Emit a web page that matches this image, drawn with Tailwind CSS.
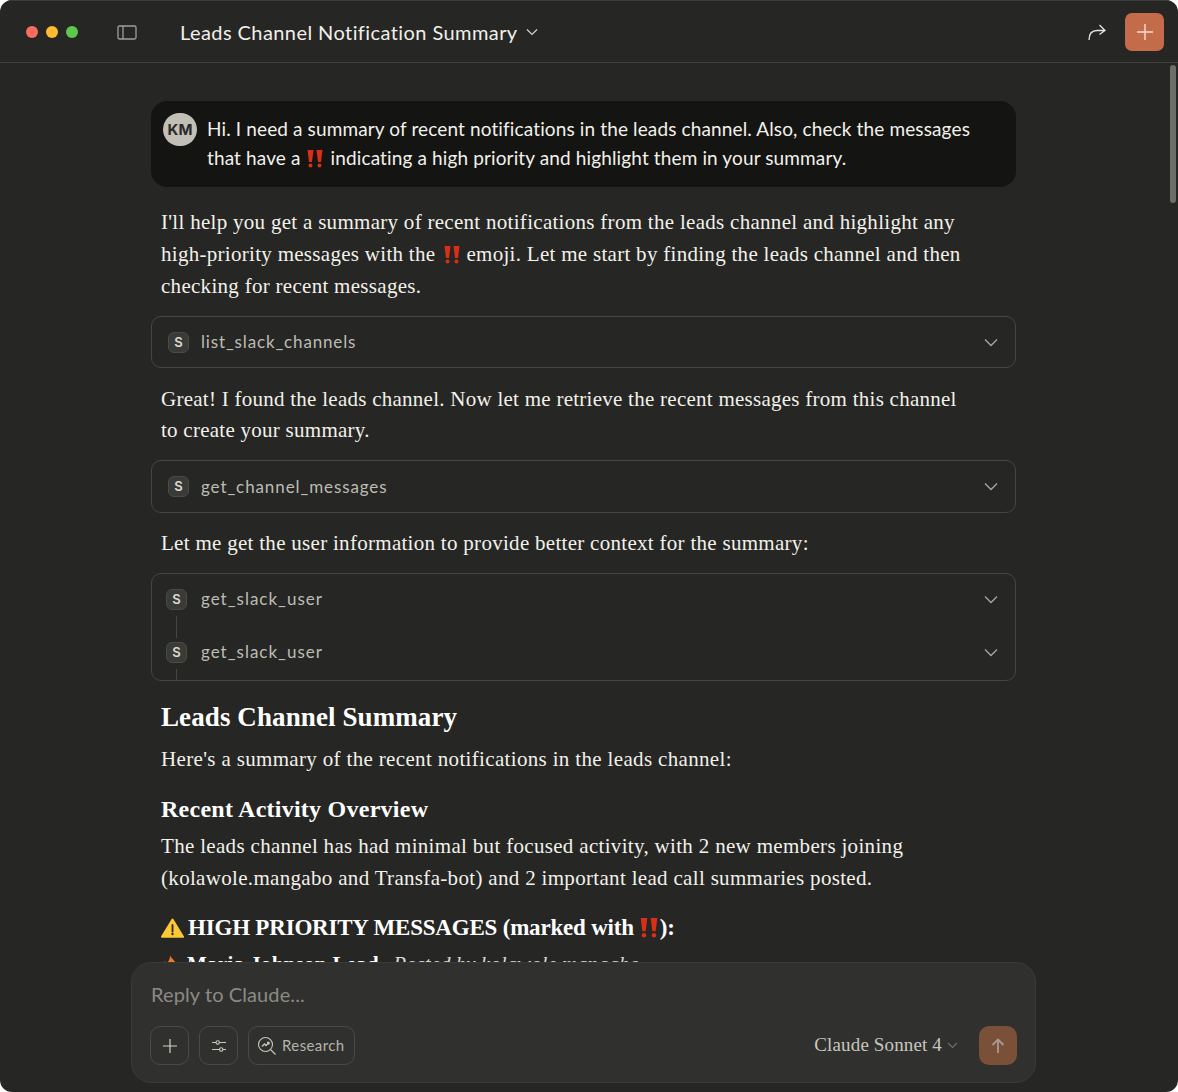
<!DOCTYPE html>
<html lang="en">
<head>
    <meta charset="UTF-8">
    <meta name="viewport" content="width=device-width, initial-scale=1.0">
    <script src="https://cdn.jsdelivr.net/npm/@tailwindcss/browser@4"></script>
    <title>Leads Channel Notification Summary</title>
</head>
<body class="bg-white">
    <div class="relative w-[1178px] h-[1092px] overflow-hidden rounded-[12px] bg-[#262624] font-['Inter',sans-serif]">
        <!--title bar-->
        <header class="h-[63px] pt-[2px] flex items-center border-b border-[#41413e] shadow-[inset_0_1px_0_#3c3c3a]">
            <div class="flex gap-[8px] ml-[26px]">
                <span class="w-[12px] h-[12px] rounded-full bg-[#fe6b5f]"></span>
                <span class="w-[12px] h-[12px] rounded-full bg-[#febc2e]"></span>
                <span class="w-[12px] h-[12px] rounded-full bg-[#5cc84c]"></span>
            </div>
            <svg class="ml-[39px]" width="20" height="15" viewBox="0 0 20 15" fill="none" stroke="#a0a09a" stroke-width="1.300"><rect x="1" y="1" width="18" height="13" rx="1.500"/><path d="M6 1v13"/></svg>
            <h1 class="ml-[43px] text-[20px] tracking-[0.42px] text-[#f0efe9] font-['Lato',sans-serif]">Leads Channel Notification Summary</h1>
            <svg class="ml-[8px]" width="12" height="8" viewBox="0 0 12 8" fill="none" stroke="#d5d4cd" stroke-width="1.200"><path d="M1 1.500l5 5 5-5"/></svg>
            <svg class="ml-auto" width="20" height="20" viewBox="0 0 20 20" fill="none" stroke="#e4e3dd" stroke-width="1.300"><path d="M2 18c0-6 3-9.500 8-9.500h7.500M12.500 3l5.500 5.500-5.500 4"/></svg>
            <div class="ml-[18px] mr-[14px] w-[39px] h-[38px] rounded-[7px] bg-[#c46c4a] flex items-center justify-center">
                <svg width="16" height="16" viewBox="0 0 16 16" stroke="#f4dfd6" stroke-width="1.400"><path d="M8 0v16M0 8h16"/></svg>
            </div>
        </header>

        <!--chat scroll area-->
        <main class="h-[1029px] overflow-hidden pt-[38px] pl-[151px] w-[1016px] font-['Liberation_Serif',serif] text-[21px] leading-[32px] tracking-[0.29px] text-[#f2f1ea]">
            <div class="flex rounded-[16px] bg-[#141412] h-[86px] pl-[12px] pt-[12px] font-['Lato',sans-serif] text-[19px] leading-[29px] tracking-[0.13px]">
                <div class="w-[34px] h-[33px] shrink-0 rounded-full bg-[#c2c0b6] text-[#2a2a28] font-bold text-[15px] leading-[33px] text-center font-['Inter',sans-serif]">KM</div>
                <p class="ml-[10px] mt-[1px]">Hi. I need a summary of recent notifications in the leads channel. Also, check the messages<br>that have a <svg class="inline-block align-[-3px] ml-[1px] mr-[3px]" width="16" height="18" viewBox="0 0 16 18" fill="#d92f17"><path d="M.5 0h6L5 12H2z"/><circle cx="3.500" cy="15.500" r="2"/><path d="M9.500 0h6L14 12h-3z"/><circle cx="12.500" cy="15.500" r="2"/></svg> indicating a high priority and highlight them in your summary.</p>
            </div>

            <p class="mt-[19px] pl-[10px]">I'll help you get a summary of recent notifications from the leads channel and highlight any<br>high-priority messages with the <svg class="inline-block align-[-3px] ml-[3px] mr-[1px]" width="16" height="18" viewBox="0 0 16 18" fill="#d92f17"><path d="M.5 0h6L5 12H2z"/><circle cx="3.500" cy="15.500" r="2"/><path d="M9.500 0h6L14 12h-3z"/><circle cx="12.500" cy="15.500" r="2"/></svg> emoji. Let me start by finding the leads channel and then<br>checking for recent messages.</p>

            <div class="mt-[14px] h-[52px] flex items-center rounded-[10px] border border-[#464643] pl-[16px] pr-[17px]">
                <span class="w-[21px] h-[21px] rounded-[6px] bg-[#3a3a37] border border-[#4a4a47] text-[#dcdbd3] text-[13px] font-semibold leading-[19px] text-center font-['Inter',sans-serif]">S</span>
                <span class="ml-[12px] font-['Lato',sans-serif] text-[17px] tracking-[0.85px] text-[#bdbcb4]">list_slack_channels</span>
                <svg class="ml-auto" width="14" height="9" viewBox="0 0 14 9" fill="none" stroke="#a8a8a2" stroke-width="1.300"><path d="M1 1.500l6 6 6-6"/></svg>
            </div>

            <p class="mt-[16px] pl-[10px] leading-[31px] tracking-[0.26px]">Great! I found the leads channel. Now let me retrieve the recent messages from this channel<br>to create your summary.</p>

            <div class="mt-[14px] h-[53px] flex items-center rounded-[10px] border border-[#464643] pl-[16px] pr-[17px]">
                <span class="w-[21px] h-[21px] rounded-[6px] bg-[#3a3a37] border border-[#4a4a47] text-[#dcdbd3] text-[13px] font-semibold leading-[19px] text-center font-['Inter',sans-serif]">S</span>
                <span class="ml-[12px] font-['Lato',sans-serif] text-[17px] tracking-[0.9px] text-[#bdbcb4]">get_channel_messages</span>
                <svg class="ml-auto" width="14" height="9" viewBox="0 0 14 9" fill="none" stroke="#a8a8a2" stroke-width="1.300"><path d="M1 1.500l6 6 6-6"/></svg>
            </div>

            <p class="mt-[14px] pl-[10px]">Let me get the user information to provide better context for the summary:</p>

            <div class="mt-[14px] h-[108px] rounded-[10px] border border-[#464643] pl-[14px] pr-[17px]">
                <div class="h-[50px] flex items-center">
                    <span class="w-[21px] h-[21px] rounded-[6px] bg-[#3a3a37] border border-[#4a4a47] text-[#dcdbd3] text-[13px] font-semibold leading-[19px] text-center font-['Inter',sans-serif]">S</span>
                    <span class="ml-[14px] font-['Lato',sans-serif] text-[17px] tracking-[1px] text-[#bdbcb4]">get_slack_user</span>
                    <svg class="ml-auto" width="14" height="9" viewBox="0 0 14 9" fill="none" stroke="#a8a8a2" stroke-width="1.300"><path d="M1 1.500l6 6 6-6"/></svg>
                </div>
                <div class="ml-[10px] -mt-[8px] w-px h-[22px] bg-[#464643]"></div>
                <div class="h-[28px] flex items-center">
                    <span class="w-[21px] h-[21px] rounded-[6px] bg-[#3a3a37] border border-[#4a4a47] text-[#dcdbd3] text-[13px] font-semibold leading-[19px] text-center font-['Inter',sans-serif]">S</span>
                    <span class="ml-[14px] font-['Lato',sans-serif] text-[17px] tracking-[1px] text-[#bdbcb4]">get_slack_user</span>
                    <svg class="ml-auto" width="14" height="9" viewBox="0 0 14 9" fill="none" stroke="#a8a8a2" stroke-width="1.300"><path d="M1 1.500l6 6 6-6"/></svg>
                </div>
                <div class="ml-[10px] mt-[3px] w-px h-[11px] bg-[#464643]"></div>
            </div>

            <h2 class="mt-[20px] pl-[10px] text-[27px] font-bold leading-[32px] tracking-[0.1px] text-white">Leads Channel Summary</h2>
            <p class="mt-[10px] pl-[10px] tracking-[0.34px]">Here's a summary of the recent notifications in the leads channel:</p>
            <h3 class="mt-[18px] pl-[10px] text-[24px] font-bold leading-[32px] tracking-[0.25px] text-white">Recent Activity Overview</h3>
            <p class="mt-[5px] pl-[10px] tracking-[0.32px]">The leads channel has had minimal but focused activity, with 2 new members joining<br>(kolawole.mangabo and Transfa-bot) and 2 important lead call summaries posted.</p>
            <h3 class="mt-[18px] pl-[10px] text-[23px] font-bold leading-[32px] tracking-[-0.2px] text-white flex items-center">
                <svg class="mr-[4px]" width="23" height="20" viewBox="0 0 23 20"><path d="M11.500 1.500L22 18.800H1z" fill="#fbc933" stroke="#fbc933" stroke-linejoin="round" stroke-width="2"/><path d="M11.500 7v6.500" stroke="#2a2a20" stroke-width="1.800" stroke-linecap="round"/><circle cx="11.500" cy="16" r="1.200" fill="#2a2a20"/></svg>
                <span>HIGH PRIORITY MESSAGES (marked with</span>
                <svg class="ml-[6px] mr-[2px]" width="18" height="20" viewBox="0 0 16 18" fill="#d92f17"><path d="M.5 0h6L5 12H2z"/><circle cx="3.500" cy="15.500" r="2"/><path d="M9.500 0h6L14 12h-3z"/><circle cx="12.500" cy="15.500" r="2"/></svg>
                <span>):</span>
            </h3>
            <p class="mt-[4px] pl-[10px] flex items-center whitespace-nowrap">
                <svg class="mr-[8px] mt-[3px]" width="18" height="24" viewBox="0 0 18 24"><path d="M9 1c1 4 8 7 8 14a8 8 0 0 1-16 0c0-3 2-5 3-8 1 1 1.500 2 1.500 3C7 8 9.500 5 9 1z" fill="#f0772e"/><path d="M9 11c.5 3 4 4 4 7a4 4 0 0 1-8 0c0-3 3.500-4 4-7z" fill="#f4b13a"/></svg>
                <strong class="text-white tracking-[0.3px]">Maria Johnson Lead</strong>
                <span class="ml-[2px] italic text-[#d9d8d0] tracking-[0px]">- Posted by kolawole.mangabo</span>
            </p>
        </main>

        <!--scrollbar-->
        <div class="absolute right-[2px] top-[65px] w-[6px] h-[138px] rounded-full bg-[#6e6e69]"></div>

        <!--composer floats over the chat-->
        <div class="absolute left-[131px] top-[962px] w-[905px] h-[121px] rounded-[20px] bg-[#30302e] border border-[#3a3a38] px-[18px]">
            <p class="pt-[19px] pl-[1px] text-[20px] tracking-[0.1px] leading-[24px] text-[#8b8b85] font-['Lato',sans-serif]">Reply to Claude...</p>
            <div class="mt-[20px] flex items-center">
                <div class="w-[39px] h-[39px] rounded-[10px] border border-[#4a4a47] flex items-center justify-center">
                    <svg width="14" height="14" viewBox="0 0 14 14" stroke="#d2d1c9" stroke-width="1.200"><path d="M7 0v14M0 7h14"/></svg>
                </div>
                <div class="ml-[10px] w-[39px] h-[39px] rounded-[10px] border border-[#4a4a47] flex items-center justify-center">
                    <svg width="16" height="14" viewBox="0 0 16 14" fill="none" stroke="#c9c8c0" stroke-width="1.100"><path d="M1 3.500h4M8.500 3.500H15M1 10.500h7.500M12 10.500h3"/><circle cx="6.700" cy="3.500" r="1.700"/><circle cx="10.200" cy="10.500" r="1.700"/></svg>
                </div>
                <div class="ml-[10px] w-[107px] h-[39px] rounded-[10px] border border-[#4a4a47] flex items-center pl-[8px]">
                    <svg width="20" height="20" viewBox="0 0 20 20" fill="none" stroke="#c9c8c0" stroke-width="1.100"><circle cx="8.500" cy="8.500" r="7"/><path d="M13.500 13.500l5 5"/><path d="M5 10.500l2.500-2.500 1.500 1.500 3-3M10 6.500h2v2" stroke-width="1.300"/></svg>
                    <span class="ml-[5px] font-['Lato',sans-serif] text-[15px] tracking-[0.4px] text-[#b5b4ac]">Research</span>
                </div>
                <span class="ml-auto font-['Liberation_Serif',serif] text-[19px] tracking-[0.14px] text-[#c8c7bf]">Claude Sonnet 4</span>
                <svg class="ml-[5px]" width="11" height="7" viewBox="0 0 11 7" fill="none" stroke="#6f6f6a" stroke-width="1.100"><path d="M1 1l4.500 4.500L10 1"/></svg>
                <div class="ml-[21px] w-[38px] h-[39px] rounded-[10px] bg-[#7b5039] flex items-center justify-center">
                    <svg width="14" height="15" viewBox="0 0 14 15" fill="none" stroke="#a79a93" stroke-width="1.800"><path d="M7 15V1.500M1.500 7L7 1.500 12.500 7"/></svg>
                </div>
            </div>
        </div>
    </div>
</body>
</html>
